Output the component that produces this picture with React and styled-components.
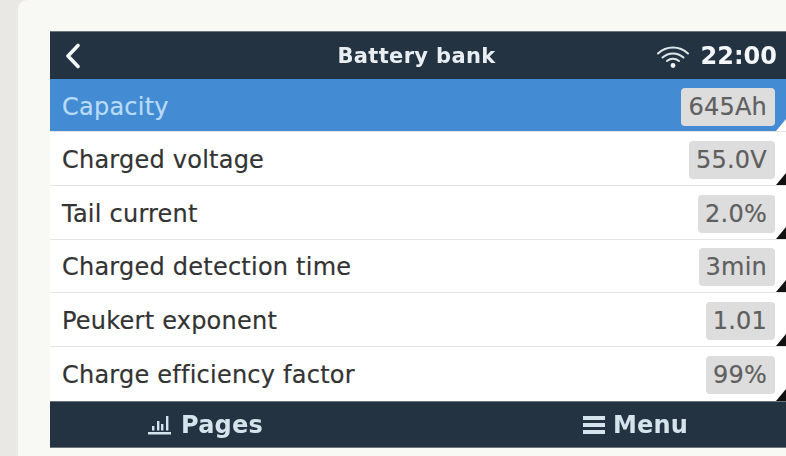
import React from "react";
import styled, { createGlobalStyle } from "styled-components";

const Global = createGlobalStyle`
  html, body { margin: 0; padding: 0; background: #e9e8e4; overflow: hidden; }
  #root { width: 786px; height: 456px; }
`;

const Page = styled.div`
  width: 786px;
  height: 456px;
  padding-left: 18px;
  box-sizing: border-box;
  overflow: hidden;
`;

const Card = styled.div`
  height: 456px;
  background: #f8f8f5;
  border-top-left-radius: 9px;
  padding: 31px 0 0 32px;
  box-sizing: border-box;
`;

const Screen = styled.div`
  width: 736px;
  display: flex;
  flex-direction: column;
  font-family: "DejaVu Sans", sans-serif;
  filter: blur(0.6px);
`;

const Header = styled.header`
  height: 48px;
  box-sizing: border-box;
  background: #233341;
  border-top: 1px solid #6d757c;
  color: #f4f7f9;
  display: grid;
  grid-template-columns: 1fr auto 1fr;
  align-items: center;
  padding: 0 9px 0 14px;
`;

const Title = styled.div`
  font-size: 21px;
  font-weight: 700;
  letter-spacing: 0.35px;
  color: #e9eef2;
  transform: translate(-4px, -0.5px);
`;

const Status = styled.div`
  justify-self: end;
  display: flex;
  align-items: center;
  gap: 11px;
`;

const Clock = styled.span`
  font-size: 24px;
  font-weight: 700;
`;

const List = styled.div`
  display: flex;
  flex-direction: column;
`;

const Row = styled.div`
  height: ${(p) => (p.$active ? 53 : 53.8)}px;
  box-sizing: border-box;
  position: relative;
  background: ${(p) => (p.$active ? "#438bd2" : "#ffffff")};
  border-bottom: 1px solid #e4e4e2;
  display: flex;
  align-items: center;
  justify-content: space-between;
  padding: 3px 11px 0 12px;
  &:last-child { border-bottom: none; padding-top: 1px; }
`;

const Label = styled.span`
  font-size: 24px;
  letter-spacing: 0.23px;
  -webkit-text-stroke: 0.2px currentColor;
  color: ${(p) => (p.$active ? "#b9dcf8" : "#333333")};
`;

const Value = styled.span`
  background: #dddddd;
  border-radius: 4px;
  height: 38px;
  padding: 0 8px 0 7px;
  display: flex;
  align-items: center;
  font-size: 24px;
  letter-spacing: 0.23px;
  -webkit-text-stroke: 0.2px currentColor;
  color: #5f5f5f;
`;

const Corner = styled.span`
  position: absolute;
  right: 0;
  bottom: 0;
  width: 0;
  height: 0;
  border-style: solid;
  border-width: 0 0 12px 10px;
  border-color: transparent transparent ${(p) => (p.$active ? "#ffffff" : "#111111")} transparent;
`;

const Footer = styled.footer`
  height: 47px;
  box-sizing: border-box;
  background: #233341;
  border-top: 1px solid #6d757c;
  border-bottom: 1px solid #6d757c;
  display: grid;
  grid-template-columns: 435px 1fr;
  align-items: center;
  padding: 2px 0 0 98px;
`;

const FooterItem = styled.div`
  display: flex;
  align-items: center;
  gap: ${(p) => p.$gap}px;
  font-size: 24px;
  font-weight: 700;
  letter-spacing: 0.2px;
  color: #d5e3ec;
`;

const rows = [
  ["Capacity", "645Ah"],
  ["Charged voltage", "55.0V"],
  ["Tail current", "2.0%"],
  ["Charged detection time", "3min"],
  ["Peukert exponent", "1.01"],
  ["Charge efficiency factor", "99%"],
];

const Back = () => (
  <svg width="18" height="26" viewBox="0 0 18 26" fill="none">
    <path d="M14 2.5 L4 13 L14 23.5" stroke="#f4f7f9" strokeWidth="3.6" strokeLinecap="round" strokeLinejoin="round" />
  </svg>
);

const Wifi = () => (
  <svg width="34" height="26" viewBox="0 0 34 26" fill="none" stroke="#dfe6ea" strokeLinecap="round">
    <path d="M2 10.5 C10.5 2.5 23.5 2.5 32 10.5" strokeWidth="2" />
    <path d="M6.5 14.5 C12.5 9 21.5 9 27.5 14.5" strokeWidth="2" />
    <path d="M11 18 C14.5 15 19.5 15 23 18" strokeWidth="2" />
    <circle cx="17" cy="22.5" r="2.4" fill="#f4f7f9" stroke="none" />
  </svg>
);

const Bars = () => (
  <svg width="23" height="22" viewBox="0 0 23 22" fill="#d5e3ec">
    <rect x="0" y="18" width="23" height="2.5" />
    <rect x="4" y="12" width="2.4" height="4.5" />
    <rect x="9" y="7" width="2.4" height="9.5" />
    <rect x="13" y="10" width="2.4" height="6.5" />
    <rect x="18" y="2" width="2.4" height="14.5" />
  </svg>
);

const Burger = () => (
  <svg width="22" height="22" viewBox="0 0 22 22" fill="#d5e3ec">
    <rect x="0" y="2" width="22" height="4" />
    <rect x="0" y="9" width="22" height="4" />
    <rect x="0" y="16" width="22" height="4" />
  </svg>
);

export default function App() {
  return (
    <Page>
      <Global />
      <Card>
        <Screen>
          <Header>
            <Back />
            <Title>Battery bank</Title>
            <Status>
              <Wifi />
              <Clock>22:00</Clock>
            </Status>
          </Header>
          <List>
            {rows.map(([label, value], i) => (
              <Row key={label} $active={i === 0}>
                <Label $active={i === 0}>{label}</Label>
                <Value>{value}</Value>
                <Corner $active={i === 0} />
              </Row>
            ))}
          </List>
          <Footer>
            <FooterItem $gap={10}><Bars />Pages</FooterItem>
            <FooterItem $gap={8}><Burger />Menu</FooterItem>
          </Footer>
        </Screen>
      </Card>
    </Page>
  );
}
